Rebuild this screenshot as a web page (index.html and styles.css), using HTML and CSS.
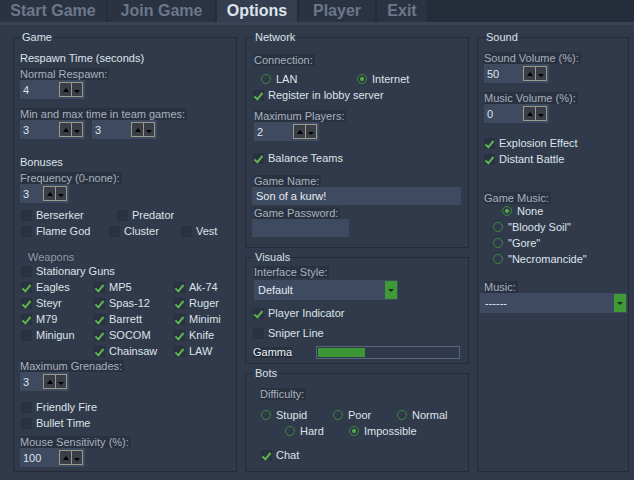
FILE: index.html
```html
<!DOCTYPE html>
<html lang="en">
<head>
    <meta charset="UTF-8" />
    <title>Options</title>
    <link rel="stylesheet" href="styles.css">
</head>
<body>
    <div class="tabs">
        <div class="tab">Start Game</div>
        <div class="tab">Join Game</div>
        <div class="tab active">Options</div>
        <div class="tab">Player</div>
        <div class="tab">Exit</div>
    </div>

    <div class="main">
        <!-- Game -->
        <fieldset class="grp grp-game">
            <legend>Game</legend>
            <div class="txt respawn-title">Respawn Time (seconds)</div>
            <div class="lbl gap3"><span>Normal Respawn:</span></div>
            <div class="spin"><span class="val">4</span><span class="btns"><i class="up"></i><i class="down"></i></span></div>
            <div class="lbl gap9"><span>Min and max time in team games:</span></div>
            <div class="spins">
                <div class="spin"><span class="val">3</span><span class="btns"><i class="up"></i><i class="down"></i></span></div>
                <div class="spin"><span class="val">3</span><span class="btns"><i class="up"></i><i class="down"></i></span></div>
            </div>
            <div class="txt bonuses-title">Bonuses</div>
            <div class="lbl gap3"><span>Frequency (0-none):</span></div>
            <div class="spin narrow"><span class="val">3</span><span class="btns"><i class="up"></i><i class="down"></i></span></div>
            <div class="opts bonus-a">
                <label class="opt"><span class="box"></span>Berserker</label>
                <label class="opt"><span class="box"></span>Predator</label>
            </div>
            <div class="opts bonus-b">
                <label class="opt"><span class="box"></span>Flame God</label>
                <label class="opt"><span class="box"></span>Cluster</label>
                <label class="opt"><span class="box"></span>Vest</label>
            </div>
            <div class="sub-title"><span>Weapons</span></div>
            <div class="opts game-opt">
                <label class="opt"><span class="box"></span>Stationary Guns</label>
            </div>
            <div class="weapons">
                <label class="opt"><span class="box on"></span>Eagles</label>
                <label class="opt"><span class="box on"></span>MP5</label>
                <label class="opt"><span class="box on"></span>Ak-74</label>
                <label class="opt"><span class="box on"></span>Steyr</label>
                <label class="opt"><span class="box on"></span>Spas-12</label>
                <label class="opt"><span class="box on"></span>Ruger</label>
                <label class="opt"><span class="box on"></span>M79</label>
                <label class="opt"><span class="box on"></span>Barrett</label>
                <label class="opt"><span class="box on"></span>Minimi</label>
                <label class="opt"><span class="box"></span>Minigun</label>
                <label class="opt"><span class="box on"></span>SOCOM</label>
                <label class="opt"><span class="box on"></span>Knife</label>
                <span></span>
                <label class="opt"><span class="box on"></span>Chainsaw</label>
                <label class="opt"><span class="box on"></span>LAW</label>
            </div>
            <div class="lbl gap1"><span>Maximum Grenades:</span></div>
            <div class="spin narrow"><span class="val">3</span><span class="btns"><i class="up"></i><i class="down"></i></span></div>
            <div class="opts game-opt friendly">
                <label class="opt"><span class="box"></span>Friendly Fire</label>
            </div>
            <div class="opts game-opt">
                <label class="opt"><span class="box"></span>Bullet Time</label>
            </div>
            <div class="lbl gap5"><span>Mouse Sensitivity (%):</span></div>
            <div class="spin"><span class="val">100</span><span class="btns"><i class="up"></i><i class="down"></i></span></div>
        </fieldset>

        <div class="col">
            <!-- Network -->
            <fieldset class="grp grp-net">
                <legend>Network</legend>
                <div class="lbl conn-title"><span>Connection:</span></div>
                <div class="opts conn">
                    <label class="opt"><span class="rad"></span>LAN</label>
                    <label class="opt"><span class="rad on"></span>Internet</label>
                </div>
                <div class="opts mid-opt">
                    <label class="opt"><span class="box on"></span>Register in lobby server</label>
                </div>
                <div class="lbl gap7"><span>Maximum Players:</span></div>
                <div class="spin"><span class="val">2</span><span class="btns"><i class="up"></i><i class="down"></i></span></div>
                <div class="opts mid-opt balance">
                    <label class="opt"><span class="box on"></span>Balance Teams</label>
                </div>
                <div class="lbl gap9"><span>Game Name:</span></div>
                <div class="inp">Son of a kurw!</div>
                <div class="lbl gap2"><span>Game Password:</span></div>
                <div class="inp short"></div>
            </fieldset>

            <!-- Visuals -->
            <fieldset class="grp grp-vis">
                <legend>Visuals</legend>
                <div class="lbl gap2"><span>Interface Style:</span></div>
                <div class="sel style-sel"><span>Default</span><i class="arr"></i></div>
                <div class="opts mid-opt player-ind">
                    <label class="opt"><span class="box on"></span>Player Indicator</label>
                </div>
                <div class="opts mid-opt sniper">
                    <label class="opt"><span class="box"></span>Sniper Line</label>
                </div>
                <div class="gamma">
                    <span class="gamma-lbl">Gamma</span>
                    <div class="slider"><div class="fill" style="width: 47px"></div></div>
                </div>
            </fieldset>

            <!-- Bots -->
            <fieldset class="grp grp-bots">
                <legend>Bots</legend>
                <div class="lbl diff-title"><span>Difficulty:</span></div>
                <div class="opts diff-a">
                    <label class="opt"><span class="rad"></span>Stupid</label>
                    <label class="opt"><span class="rad"></span>Poor</label>
                    <label class="opt"><span class="rad"></span>Normal</label>
                </div>
                <div class="opts diff-b">
                    <label class="opt"><span class="rad"></span>Hard</label>
                    <label class="opt"><span class="rad on"></span>Impossible</label>
                </div>
                <div class="opts chat">
                    <label class="opt"><span class="box on"></span>Chat</label>
                </div>
            </fieldset>
        </div>

        <!-- Sound -->
        <fieldset class="grp grp-sound">
            <legend>Sound</legend>
            <div class="lbl sound-title"><span>Sound Volume (%):</span></div>
            <div class="spin"><span class="val">50</span><span class="btns"><i class="up"></i><i class="down"></i></span></div>
            <div class="lbl gap9"><span>Music Volume (%):</span></div>
            <div class="spin"><span class="val">0</span><span class="btns"><i class="up"></i><i class="down"></i></span></div>
            <div class="opts explosion">
                <label class="opt"><span class="box on"></span>Explosion Effect</label>
            </div>
            <div class="opts">
                <label class="opt"><span class="box on"></span>Distant Battle</label>
            </div>
            <div class="lbl music-title"><span>Game Music:</span></div>
            <div class="tracks">
                <label class="opt none"><span class="rad on"></span>None</label>
                <label class="opt"><span class="rad"></span>"Bloody Soil"</label>
                <label class="opt"><span class="rad"></span>"Gore"</label>
                <label class="opt"><span class="rad"></span>"Necromancide"</label>
            </div>
            <div class="lbl gap14"><span>Music:</span></div>
            <div class="sel music-sel"><span>------</span><i class="arr"></i></div>
        </fieldset>
    </div>
</body>
</html>
```

FILE: styles.css
```css
* {
    margin: 0;
    padding: 0;
    box-sizing: border-box;
}

body {
    font-family: "Liberation Sans", Arial, sans-serif;
    font-size: 11px;
    background-color: #313a4b;
    color: #dde3ea;
    width: 634px;
    height: 480px;
    overflow: hidden;
}

/* tab bar */
.tabs {
    display: flex;
    gap: 2px;
    height: 25px;
    background-color: #262d3a;
    border-bottom: 3px solid #3a4456;
}

.tab {
    height: 22px;
    line-height: 22px;
    text-align: center;
    font-size: 16px;
    font-weight: bold;
    color: #6b778a;
    background-color: #2b3343;
}

.tab:nth-child(1) { width: 106px; }
.tab:nth-child(2) { width: 107px; }
.tab:nth-child(3) { width: 80px; }
.tab:nth-child(4) { width: 76px; }
.tab:nth-child(5) { width: 50px; }

.tab.active {
    color: #dce4ee;
    background-color: #343e50;
}

/* layout */
.main {
    display: grid;
    grid-template-columns: 224px 224px 152px;
    column-gap: 8px;
    height: 455px;
    padding: 6px 0 8px 13px;
}

.col {
    display: flex;
    flex-direction: column;
    gap: 3px;
}

.grp {
    border: 1px solid #252c38;
    padding: 0 6px;
    min-width: 0;
}

.grp legend {
    line-height: 13px;
    padding: 0 1px;
    margin-left: 1px;
    color: #d9e0e8;
}

.grp-net,
.grp-vis,
.grp-bots {
    padding: 0 8px;
}

.grp-net legend,
.grp-vis legend,
.grp-bots legend {
    margin-left: 0;
}

.grp-net { height: 217px; }
.grp-vis { height: 113px; }
.grp-bots { flex: 1; }

/* text and labels */
.txt {
    height: 14px;
    line-height: 14px;
}

.respawn-title { margin-top: 7px; }
.bonuses-title { margin-top: 16px; }

.lbl {
    height: 12px;
    line-height: 12px;
}

.lbl span {
    display: inline-block;
    background-color: #2a3140;
    color: #a7b1bf;
    padding-right: 2px;
}

.gap1 { margin-top: 1px; }
.gap2 { margin-top: 2px; }
.gap3 { margin-top: 3px; }
.gap5 { margin-top: 5px; }
.gap7 { margin-top: 7px; }
.gap9 { margin-top: 9px; }
.gap14 { margin-top: 14px; }

.sub-title {
    height: 12px;
    line-height: 12px;
    margin: 12px 0 0 8px;
}

.sub-title span {
    background-color: #2e3646;
    color: #8e99a9;
}

/* spin boxes */
.spin {
    display: flex;
    align-items: center;
    width: 65px;
    height: 19px;
    background-color: #3d4a5f;
}

.spin.narrow {
    width: 49px;
}

.spin .val {
    flex: 1;
    padding-left: 3px;
}

.spins {
    display: flex;
    gap: 7px;
}

.btns {
    display: flex;
    height: 15px;
    margin-right: 2px;
    border: 1px solid #9b998a;
    background-color: #393e47;
}

.btns i {
    display: flex;
    justify-content: center;
    width: 11px;
}

.btns i + i {
    border-left: 1px solid #9b998a;
}

.btns .up {
    align-items: center;
}

.btns .down {
    align-items: flex-end;
    padding-bottom: 3px;
}

.btns .up::after {
    content: "";
    border-left: 3px solid transparent;
    border-right: 3px solid transparent;
    border-bottom: 4px solid #000;
}

.btns .down::after {
    content: "";
    border-left: 3px solid transparent;
    border-right: 3px solid transparent;
    border-top: 3px solid #000;
}

/* checkboxes and radios */
.opts {
    display: flex;
    height: 16px;
}

.opt {
    display: flex;
    align-items: center;
    height: 16px;
    white-space: nowrap;
}

.box {
    display: flex;
    justify-content: center;
    width: 11px;
    height: 11px;
    margin-right: 4px;
    background-color: #2b3241;
    border: 1px solid #283040;
}

.box.on::after {
    content: "";
    width: 3px;
    height: 7px;
    margin-top: 0;
    border: solid #5bb450;
    border-width: 0 2px 2px 0;
    transform: rotate(40deg);
}

.rad {
    display: flex;
    align-items: center;
    justify-content: center;
    width: 10px;
    height: 10px;
    margin-right: 5px;
    border: 1px solid #3b8a39;
    border-radius: 50%;
}

.rad.on::after {
    content: "";
    width: 4px;
    height: 4px;
    border-radius: 50%;
    background-color: #4caf48;
}

.game-opt { padding-left: 1px; }
.friendly { margin-top: 8px; }

.bonus-a,
.bonus-b {
    display: grid;
    padding-left: 1px;
}

.bonus-a {
    grid-template-columns: 96px 1fr;
    margin-top: 4px;
}

.bonus-b {
    grid-template-columns: 88px 72px 1fr;
}

.weapons {
    display: grid;
    grid-template-columns: 73px 80px 1fr;
    grid-auto-rows: 16px;
    padding-left: 1px;
}

/* network */
.conn-title { margin-top: 10px; }

.conn {
    display: grid;
    grid-template-columns: 96px 1fr;
    margin-top: 5px;
    padding-left: 7px;
}

.mid-opt { margin-left: -1px; }
.balance { margin-top: 9px; }

.inp {
    height: 18px;
    line-height: 18px;
    width: 209px;
    margin-left: -2px;
    padding-left: 4px;
    background-color: #3d4a5f;
    color: #e6ebf1;
}

.inp.short {
    width: 97px;
}

/* visuals */
.sel {
    display: flex;
    align-items: center;
    height: 20px;
    background-color: #3d4a5f;
}

.sel span {
    flex: 1;
    padding-left: 4px;
    color: #e6ebf1;
}

.sel .arr {
    display: flex;
    align-items: center;
    justify-content: center;
    width: 12px;
    height: 18px;
    margin-right: 1px;
    background-color: #3d9a35;
}

.sel .arr::after {
    content: "";
    border-left: 3px solid transparent;
    border-right: 3px solid transparent;
    border-top: 3px solid #1c2b22;
}

.style-sel {
    width: 144px;
    margin-top: 2px;
}

.player-ind { margin-top: 5px; }
.sniper { margin-top: 4px; }

.gamma {
    display: flex;
    align-items: center;
    height: 13px;
    margin-top: 5px;
}

.gamma-lbl {
    width: 39px;
    height: 11px;
    line-height: 11px;
    margin-left: -1px;
    background-color: #2a3140;
    color: #eef2f6;
    text-shadow: 1px 1px 0 #1b212b;
}

.slider {
    width: 145px;
    height: 13px;
    margin-left: 24px;
    padding: 1px;
    border: 1px solid #56667c;
}

.slider .fill {
    height: 9px;
    background-color: #3b9635;
}

/* bots */
.diff-title {
    margin: 8px 0 0 6px;
}

.diff-a,
.diff-b {
    display: grid;
    padding-left: 7px;
}

.diff-a {
    grid-template-columns: 72px 64px 1fr;
    margin-top: 7px;
}

.diff-b {
    grid-template-columns: 64px 1fr;
    padding-left: 31px;
}

.chat {
    margin: 8px 0 0 7px;
}

/* sound */
.sound-title { margin-top: 8px; }
.explosion { margin-top: 12px; }
.music-title { margin-top: 25px; }

.tracks {
    display: flex;
    flex-direction: column;
    margin-top: -1px;
    padding-left: 9px;
}

.tracks .none {
    padding-left: 9px;
}

.music-sel {
    width: 147px;
    margin: 0 0 0 -4px;
}

.music-sel span {
    padding-left: 5px;
}
```
